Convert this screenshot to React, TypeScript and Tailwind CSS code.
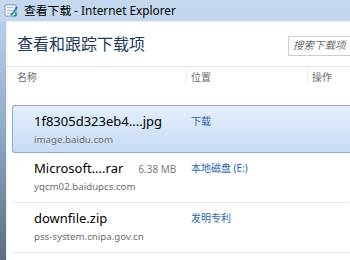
import { useState } from 'react';

const rows = [
  { name: '1f8305d323eb4....jpg', size: '', host: 'image.baidu.com', place: '下载' },
  { name: 'Microsoft....rar', size: '6.38 MB', host: 'yqcm02.baidupcs.com', place: '本地磁盘 (E:)' },
  { name: 'downfile.zip', size: '', host: 'pss-system.cnipa.gov.cn', place: '发明专利' },
];

const font = { fontFamily: '"Noto Sans", "Noto Sans CJK SC", sans-serif' };

const IeIcon = () => (
  <svg width="15" height="15" viewBox="0 0 16 16">
    <rect x="1" y="2" width="12" height="12" rx="1" fill="#f4f7fb" stroke="#7c94b4" />
    <path d="M3 5h8M3 8h6M3 11h5" stroke="#9fb3cc" strokeWidth="1" />
    <path d="M7 13c2-1 4-4 7-9" stroke="#2d7fd0" strokeWidth="2" fill="none" />
    <path d="M10 14l3-1-1-3" stroke="#1f9a3a" strokeWidth="1.5" fill="none" />
  </svg>
);

export default function App() {
  const [selected, setSelected] = useState(0);

  return (
    <div className="w-[350px] h-[260px] overflow-hidden flex flex-col bg-gradient-to-b from-[#c4d9ef] to-[#a9c6e5]" style={font}>
      <div className="h-[21px] shrink-0 flex items-center gap-[5px] pl-[4px]">
        <IeIcon />
        <span className="text-[11.8px] text-black leading-none">查看下载 - Internet Explorer</span>
      </div>
      <div className="flex-1 flex">
        <div className="w-[6px] shrink-0 bg-gradient-to-b from-[#b7d0ea] via-[#8aa7c2] to-[#5b6e7a]" />
        <div className="flex-1 bg-white border-l border-t border-[#e9eef4] flex flex-col">
          <div className="h-[44px] flex items-center justify-between pl-[10px]">
            <h1 className="text-[16px] text-[#1e395b] leading-none">查看和跟踪下载项</h1>
            <div className="w-[62px] h-[20px] mt-[4px] border border-[#c9ced4] border-r-0 flex items-center pl-[4px] text-[10.5px] italic text-[#6d6d6d] whitespace-nowrap overflow-hidden">
              搜索下载项
            </div>
          </div>
          <div className="h-[18px] border-t border-[#e3e6ea] flex text-[10px] text-[#6d6d6d] leading-none">
            <div className="w-[179px] pl-[10px] pt-[5px]">名称</div>
            <div className="w-[121px] border-l border-[#eceef1] pl-[4px] pt-[5px]">位置</div>
            <div className="flex-1 border-l border-[#eceef1] pl-[4px] pt-[5px]">操作</div>
          </div>
          <div className="h-[21px]" />
          <div className="flex flex-col pl-[5px]">
            {rows.map((r, i) => (
              <div
                key={r.name}
                onClick={() => setSelected(i)}
                className={
                  i === selected
                    ? 'h-[48px] flex rounded-l-[3px] border border-r-0 border-[#84acdd] bg-gradient-to-b from-[#e3eefb] to-[#c7dcf5]'
                    : 'h-[50px] flex border-b border-[#e6e8eb] border-x border-x-transparent'
                }
              >
                <div className="w-[175px] pl-[21px] pt-[6px] flex flex-col">
                  <div className="flex items-baseline gap-[15px] whitespace-nowrap">
                    <span className="text-[13px] text-black leading-[18px]">{r.name}</span>
                    {r.size && <span className="text-[10px] text-[#7a7a7a]">{r.size}</span>}
                  </div>
                  <span className="text-[9.7px] text-[#6d6d6d] leading-[14px] mt-[3px] whitespace-nowrap">{r.host}</span>
                </div>
                <div className="pl-[3px] pt-[8px] text-[10px] text-[#2a66ae] leading-[14px] whitespace-nowrap">{r.place}</div>
              </div>
            ))}
          </div>
        </div>
      </div>
    </div>
  );
}
